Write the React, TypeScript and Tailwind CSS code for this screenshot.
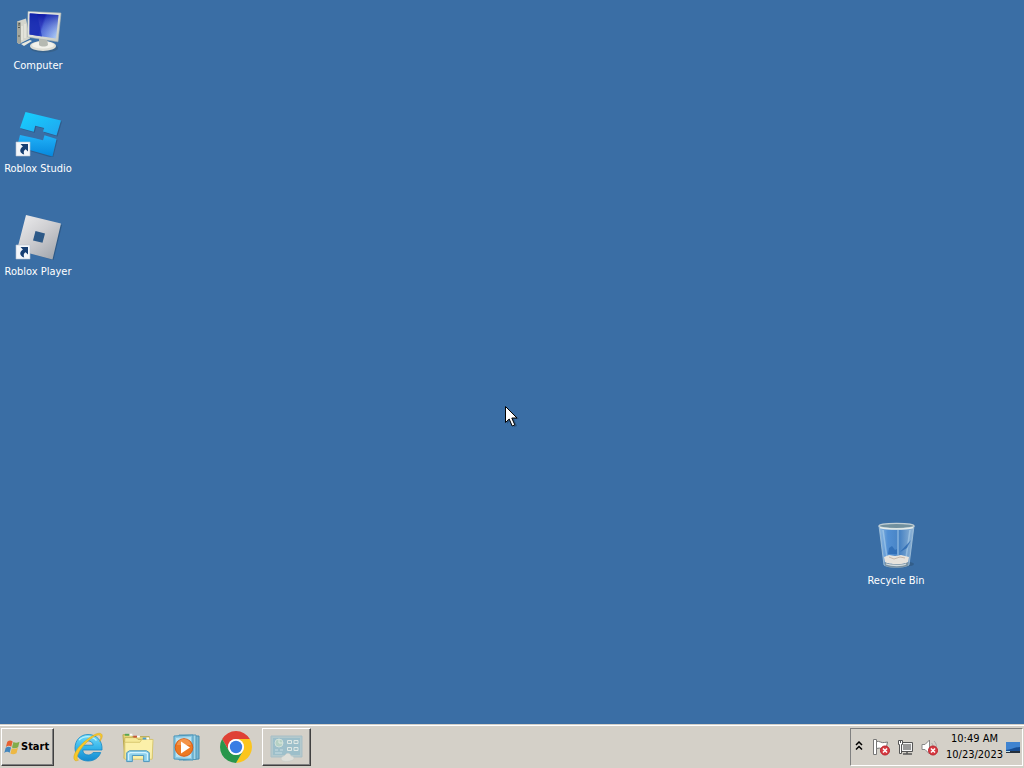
import type { ReactNode } from "react";

function ShortcutArrow() {
  return (
    <g>
      <path d="M2 33h14v14H2z" fill="#f4f7fb" stroke="#b9c4d0" strokeWidth=".6" />
      <path d="M6.500 35h7.500v7.500l-2.400-2.300c-1.800 1.100-2.300 2.500-1.400 5.300-4.600-1.300-5.400-5.100-1.300-8z" fill="#173f73" />
    </g>
  );
}

function ComputerIcon() {
  return (
    <svg viewBox="-2 -2 48 48" className="size-12" aria-hidden="true">
      <defs>
        <linearGradient id="screen" x1="0" y1=".3" x2="1" y2=".6">
          <stop offset="0" stopColor="#1222a8" />
          <stop offset=".42" stopColor="#0a12b4" />
          <stop offset=".5" stopColor="#3d5bd8" />
          <stop offset="1" stopColor="#a5c4f2" />
        </linearGradient>
        <linearGradient id="screenFade" x1="0" y1="0" x2="0" y2="1">
          <stop offset="0" stopColor="#0712a0" stopOpacity=".75" />
          <stop offset="1" stopColor="#b4d0f8" stopOpacity=".15" />
        </linearGradient>
        <linearGradient id="bezel" x1="0" y1="0" x2="1" y2="1">
          <stop offset="0" stopColor="#f4f5ee" />
          <stop offset="1" stopColor="#c6cac2" />
        </linearGradient>
      </defs>
      <path d="M1 13.500 10 10.500l4 20-11 5.500-2-1.500z" fill="#d4d5cc" />
      <path d="M1 13.500 5 14.500v20.500l-2 1-2-1.500z" fill="#a3a69d" />
      <path d="M2 17h2M2 19.500h2M2 28h2" stroke="#555950" />
      <circle cx="3.200" cy="15.500" r=".8" fill="#4a514a" />
      <path d="M6 18v14M9 16v14" stroke="#f1f1e8" />
      <path d="m5 36 9-4 2 1-8 5z" fill="#e9e9df" />
      <ellipse cx="28" cy="40" rx="14" ry="4.500" fill="#365a7b" opacity=".6" />
      <ellipse cx="27" cy="38" rx="13" ry="5" fill="#deded5" />
      <ellipse cx="27" cy="37" rx="11" ry="3.600" fill="#f2f2eb" />
      <path d="M23 30h8l1 7c-2 2-7 2-9 0z" fill="#b6bab2" />
      <path d="M12 3.500 45 5l-3 28.800L11.500 29z" fill="url(#bezel)" stroke="#a7b1b2" strokeWidth=".6" />
      <path d="M13.700 5.500 42.500 7 40 30.500l-26.500-4z" fill="url(#screen)" />
      <path d="M13.700 5.500 42.500 7 40 30.500l-26.500-4z" fill="url(#screenFade)" />
      <path d="m14 5.500 7 .4 5 22.500-12.500-2z" fill="#142ab1" opacity=".65" />
    </svg>
  );
}

function StudioIcon() {
  return (
    <svg viewBox="0 0 48 48" className="size-12" aria-hidden="true">
      <defs>
        <linearGradient id="studioTop" x1="0" y1="0" x2="1" y2="1">
          <stop offset="0" stopColor="#16d2ff" />
          <stop offset="1" stopColor="#20a4ef" />
        </linearGradient>
        <linearGradient id="studioBase" x1="0" y1="0" x2="0" y2="1">
          <stop offset="0" stopColor="#20b2f8" />
          <stop offset="1" stopColor="#0788dd" />
        </linearGradient>
      </defs>
      <g fill="#234d76" opacity=".5" transform="translate(1 1)">
        <path d="m11.500 3 35.500 8.500-4.500 15-13.500-4 1.200-3.500-9-2.200-1.500 6L6 19z" />
        <path d="m6 26 14 3 9 2.300 1.500-5L42.500 30 38 48 3 37.500z" />
      </g>
      <path d="m11.500 3 35.500 8.500-4.500 15-13.500-4 1.200-3.500-9-2.200-1.500 6L6 19z" fill="url(#studioTop)" />
      <path d="m6 26 14 3 9 2.300 1.500-5L42.500 30 38.500 47.500 3 37.500z" fill="url(#studioBase)" />
      <ShortcutArrow />
    </svg>
  );
}

function PlayerIcon() {
  return (
    <svg viewBox="0 0 48 48" className="size-12" aria-hidden="true">
      <defs>
        <linearGradient id="player" x1="0" y1="0" x2=".8" y2="1">
          <stop offset="0" stopColor="#eeeeef" />
          <stop offset=".5" stopColor="#cfcfd2" />
          <stop offset="1" stopColor="#a3a7ae" />
        </linearGradient>
      </defs>
      <path d="m13 4 35 9-8.500 35L4 38z" fill="#23496f" opacity=".55" />
      <path fillRule="evenodd" d="m12 3 35 8.500-8.500 36L3 38zm9.500 16-2.500 9.500 9.500 2.300 2.500-9.300z" fill="url(#player)" />
      <ShortcutArrow />
    </svg>
  );
}

function RecycleBinIcon() {
  return (
    <svg viewBox="0 0 48 48" className="size-12" aria-hidden="true">
      <defs>
        <linearGradient id="glass" x1="0" x2="1">
          <stop offset="0" stopColor="#aed4f4" stopOpacity=".75" />
          <stop offset=".25" stopColor="#5798e0" stopOpacity=".8" />
          <stop offset=".6" stopColor="#4b88cb" stopOpacity=".8" />
          <stop offset="1" stopColor="#b6d3ea" stopOpacity=".7" />
        </linearGradient>
      </defs>
      <ellipse cx="28" cy="43" rx="14" ry="3" fill="#294d70" opacity=".5" />
      <path d="m7 5 5 39c4 3 20 3 25 0l5-39z" fill="url(#glass)" stroke="#a7c5dc" strokeWidth=".8" />
      <path d="m11 9 4 28M26 9v25M38 9l-4 28" stroke="#b8d8ef" strokeWidth="1.600" opacity=".5" />
      <path d="m16 33 1-6 3-2 3 4 2-1v5z" fill="#2463ae" opacity=".65" />
      <path d="m28 31 11-12-4 8z" fill="#2463ae" opacity=".75" />
      <path d="m12 36 5-2 6 1 6-1 8 2-1 5c-4 3-19 3-23 0z" fill="#e7e3dc" />
      <path d="m17 36 5 2 6-2 5 1" stroke="#c8b8a9" fill="none" />
      <path d="M12.500 41c5 3 19 3 24 0l-.5 3.500c-5 3-18 3-23 0z" fill="#7d929f" />
      <path d="M14 43c6 2 16 2 20 0" stroke="#d6dfe2" strokeWidth="1.300" fill="none" />
      <ellipse cx="24.500" cy="5" rx="17.500" ry="2.600" fill="#71909e" stroke="#c1ced3" strokeWidth="1.400" />
      <path d="M8 6.500c8 2 25 2 33 0" stroke="#e4ebe9" strokeWidth="1.500" fill="none" />
    </svg>
  );
}

function WindowsLogo() {
  return (
    <svg viewBox="0 0 17 17" className="size-4 shrink-0" aria-hidden="true">
      <path d="M3.500 3c2-1.800 3.800-1.900 5.700-.4L7.700 8.200c-1.900-1.300-3.700-1.200-5.700.3z" fill="#e66031" />
      <path d="M10 3.200c2 1.200 4 1 6.500-.2L15 8.700c-2.500 1.400-4.500 1.500-6.500.2z" fill="#82ac4a" />
      <path d="M1.800 9.300c2-1.400 3.800-1.500 5.700-.3L6 14.600C4 13.200 2.200 13.400.3 14.800z" fill="#4386bd" />
      <path d="M8.300 9.700c2 1.200 4 1.100 6.500-.3l-1.500 5.700c-2.500 1.300-4.500 1.400-6.500.2z" fill="#edb844" />
    </svg>
  );
}

function ExplorerBrowserIcon() {
  return (
    <svg viewBox="2 0 32 32" className="size-8" aria-hidden="true">
      <defs>
        <linearGradient id="ieBlue" x1="0" y1="0" x2="0" y2="1">
          <stop offset="0" stopColor="#77dcf8" />
          <stop offset=".5" stopColor="#35b5ea" />
          <stop offset="1" stopColor="#1689ce" />
        </linearGradient>
      </defs>
      <path fillRule="evenodd" d="M17 3.500C9.500 3.500 4 9.300 4 17s5.500 13 13 13c6 0 10.700-3 12.700-8.500h-7.600c-1 1.700-2.700 2.500-4.800 2.500-3.200 0-5.300-1.700-5.600-5H31C31.700 9.800 25.700 3.500 17 3.500m-5.200 10.700c.6-2.800 2.400-4.300 5.300-4.300 2.700 0 4.700 1.500 5.100 4.300z" fill="url(#ieBlue)" stroke="#1788c5" strokeWidth=".8" />
      <path d="M8 9c4.500-4.300 12.500-4.800 17.500.5" stroke="#b8f1fb" strokeWidth="1.300" fill="none" />
      <path d="M4 29.500c-4-4 3-14 10.500-19.800C21.300 4.200 28 .5 30.500 3c1.700 1.700.3 4.800-1.700 7.600 1.100-3.200 1.400-5.500 0-6.300-2.300-1.400-7.800 2.100-12.700 6.700C9 17.500 3.500 27.500 7.500 29c-1.200.8-2.400 1-3.500.5" fill="#f7c928" stroke="#d8a51b" strokeWidth=".5" />
    </svg>
  );
}

function FoldersIcon() {
  return (
    <svg viewBox="0 1 34 34" className="h-8 w-[34px]" aria-hidden="true">
      <path d="M1 5h8l2 2h18v22H3z" fill="#e8d676" stroke="#b9a64b" />
      <path d="M3 8h12l2 2h15v20H2z" fill="#f5e998" stroke="#c6b35b" />
      <path d="M3 13h16l2-3h12l-1 21H3z" fill="#fbf0a9" stroke="#d5c56d" />
      <path d="M3 5h5" stroke="#55a653" strokeWidth="2" />
      <path d="M12 7h4" stroke="#c65838" strokeWidth="2" />
      <path d="M22 9h4" stroke="#4a9ed1" strokeWidth="2" />
      <path d="M8 5h3M16 7h3M26 9h3" stroke="#fff" strokeWidth="2" />
      <path d="M5 33.500V24l3-2h18l3 2v9.500h-6V27H11v6.500z" fill="#8ed1ec" stroke="#4692bd" />
      <path d="M7 32v-7l2-1h16l2 1v7" stroke="#d4f4ff" strokeWidth="1.200" fill="none" />
    </svg>
  );
}

function MediaIcon() {
  return (
    <svg viewBox="0 -1 32 32" className="size-8" aria-hidden="true">
      <path d="M12 4h16v23l-16 1z" fill="#75b6d3" stroke="#4b8dad" />
      <path d="M8 3h17v24.500L8 28z" fill="#a6d7e8" stroke="#5297b8" />
      <path d="m3 4 19-1v25L3 27z" fill="#8bc9e4" stroke="#4d97ba" />
      <path d="m5 6 15-1v21L5 25z" fill="#b9e2ef" />
      <circle cx="13" cy="15.500" r="8.800" fill="#ed7922" stroke="#d85b17" />
      <path d="M6 13c1-8 13-8 14 0" fill="#f6a05a" opacity=".7" />
      <path d="m10 9.500 9 6-9 6z" fill="#fff" />
    </svg>
  );
}

function ChromeIcon() {
  return (
    <svg viewBox="0 0 32 32" className="size-8" aria-hidden="true">
      <path d="M2.150 8A16 16 0 0 1 29.850 8H16a8 8 0 0 0-6.930 12z" fill="#df4135" />
      <path d="M29.850 8A16 16 0 0 1 16 32l6.930-12A8 8 0 0 0 16 8z" fill="#fbc51d" />
      <path d="M16 32A16 16 0 0 1 2.150 8l6.920 12a8 8 0 0 0 13.860 0z" fill="#28964b" />
      <circle cx="16" cy="16" r="8" fill="#fff" />
      <circle cx="16" cy="16" r="6.200" fill="#397de4" />
    </svg>
  );
}

function ControlPanelIcon() {
  return (
    <svg viewBox="1 0 36 32" className="h-8 w-9" aria-hidden="true">
      <path d="M3 5h31v21H3z" fill="#b3c9cd" stroke="#a9bfc6" />
      <path d="M5 7h27v17H5z" fill="#9dbfca" />
      <circle cx="11" cy="12" r="4" fill="#b5d1c4" stroke="#d0e0da" />
      <path d="M11 8v4h4" stroke="#dde8df" fill="none" />
      <path d="M7 19h3m2 0h3M7 22h7" stroke="#b3ced6" strokeWidth="2" />
      <path d="M19.500 9.500h4v3h-4zM26 9.500h4v3h-4zM19.500 16.500h4v3h-4zM26 16.500h4v3h-4z" fill="#a5c2c9" stroke="#dfe8e5" />
      <path d="M13 28c0-3 3-2 5-5 2-2 5 0 5 2 3 0 4 3 2 4-4 2-12 2-12-1" fill="#dfdfd9" stroke="#c0c9c6" strokeWidth=".5" />
    </svg>
  );
}

function ErrorBadge() {
  return (
    <g>
      <circle cx="12" cy="11.500" r="4.500" fill="#d83b43" stroke="#b9232c" />
      <path d="m10 9.500 4 4m0-4-4 4" stroke="#fff" strokeWidth="1.500" />
    </g>
  );
}

function FlagIcon() {
  return (
    <svg viewBox="0 0 17 17" className="size-[17px]" fill="none" aria-hidden="true">
      <path d="M.5.500h3v15h-3z" fill="#fff" stroke="#777" />
      <path d="M3.500 2.500c3-1 5 2 8 1l3-.500-1.500 7c-4 1-5-2-9.500-.5z" fill="#fff" stroke="#777" />
      <ErrorBadge />
    </svg>
  );
}

function NetworkIcon() {
  return (
    <svg viewBox="0 0 17 17" className="size-[17px]" fill="none" aria-hidden="true">
      <path d="M4.500 3.500h11v9h-11z" fill="#f5f5f5" stroke="#555" />
      <path d="M6 5h8v6H6z" fill="#999" />
      <path d="M10 13v2M6 15h9" stroke="#555" strokeWidth="1.500" />
      <path d="M1.500 1.500h4v4h-1v9h-2v-9h-1z" fill="#fff" stroke="#555" />
      <path d="M3.500 1v3" stroke="#555" />
    </svg>
  );
}

function VolumeIcon() {
  return (
    <svg viewBox="0 0 17 17" className="size-[17px]" fill="none" aria-hidden="true">
      <path d="M1 5.500h3L8.500 1v14L4 10.500H1z" fill="#fff" stroke="#888" />
      <path d="M10.500 4c1 1 1.500 2 1.500 4M13 2c2 2 2.500 4 2.500 6" stroke="#aaa" />
      <ErrorBadge />
    </svg>
  );
}

function ShowDesktopIcon() {
  return (
    <svg viewBox="0 0 16 16" className="size-4 shrink-0" aria-hidden="true">
      <path d="M1 3h14v11H1z" fill="#174d93" />
      <path d="M1 3h14v5C9 8 6 11 1 11z" fill="#3f83d0" />
      <path d="M1 12h14v2H1z" fill="#242f3c" />
      <path d="M1 12.500h4" stroke="#b9ddec" />
    </svg>
  );
}

function DesktopItem({ label, children }: { label: string; children: ReactNode }) {
  return (
    <button type="button" className="flex w-[76px] flex-col items-center gap-1 text-[11px] leading-4 text-white">
      {children}
      <span className="whitespace-nowrap">{label}</span>
    </button>
  );
}

function QuickLaunch({ label, children }: { label: string; children: ReactNode }) {
  return (
    <button type="button" aria-label={label} className="flex h-full w-[49px] items-center justify-center">
      {children}
    </button>
  );
}

const raised =
  "border border-t-white border-l-white border-r-[#404040] border-b-[#404040] shadow-[inset_-1px_-1px_0_#808080]";

export default function App() {
  return (
    <div className="flex min-h-screen flex-col bg-[#3a6ea5] font-['DejaVu_Sans_Condensed','DejaVu_Sans',sans-serif]">
      <main className="relative flex-1">
        <div className="flex flex-col items-start gap-[35px] pt-1.5">
          <DesktopItem label="Computer"><ComputerIcon /></DesktopItem>
          <DesktopItem label="Roblox Studio"><StudioIcon /></DesktopItem>
          <DesktopItem label="Roblox Player"><PlayerIcon /></DesktopItem>
        </div>
        <div className="absolute right-[90px] bottom-[135px]">
          <DesktopItem label="Recycle Bin"><RecycleBinIcon /></DesktopItem>
        </div>
        <svg viewBox="0 0 16 24" className="absolute top-[406px] left-[505px] h-6 w-4" aria-hidden="true">
          <path d="M2 2v16l4-4 3 7 3-1-3-7h5z" fill="#16304b" opacity=".4" />
          <path d="M.5.500v16l3.700-3.500 3 7 2.600-1.100-3-6.900H12z" fill="#fff" stroke="#000" />
        </svg>
      </main>

      <footer className="flex h-11 items-stretch border-t border-[#d4d0c8] bg-[#d4d0c8] text-black shadow-[inset_0_1px_0_#fff]">
        <div className="flex flex-1 items-stretch pt-[3px] pb-0.5 pl-px">
          <button type="button" className={`${raised} flex w-[53px] items-center gap-px pl-0.5 text-[11px] font-bold`}>
            <WindowsLogo />
            <span>Start</span>
          </button>
          <nav aria-label="Quick launch" className="ml-2.5 flex items-stretch">
            <QuickLaunch label="Internet Explorer"><ExplorerBrowserIcon /></QuickLaunch>
            <QuickLaunch label="Windows Explorer"><FoldersIcon /></QuickLaunch>
            <QuickLaunch label="Media Player"><MediaIcon /></QuickLaunch>
            <QuickLaunch label="Google Chrome"><ChromeIcon /></QuickLaunch>
          </nav>
          <button type="button" aria-label="Control Panel" className={`${raised} ml-0.5 flex w-[49px] items-center justify-center`}>
            <ControlPanelIcon />
          </button>
        </div>
        <section aria-label="Notification area" className="mt-[3px] mr-px mb-0.5 flex items-center border border-t-[#808080] border-l-[#808080] border-r-white border-b-white pr-px pl-1">
          <button type="button" aria-label="Show hidden icons" className="flex h-4 w-2 items-center justify-center">
            <svg viewBox="0 0 8 12" className="h-3 w-2" fill="none" stroke="#000" strokeWidth="1.500" aria-hidden="true">
              <path d="m1 4 3-3 3 3M1 8.500l3-3 3 3" />
            </svg>
          </button>
          <div className="ml-2.5 flex gap-[7px]">
            <button type="button" aria-label="Action Center"><FlagIcon /></button>
            <button type="button" aria-label="Network"><NetworkIcon /></button>
            <button type="button" aria-label="Volume"><VolumeIcon /></button>
          </div>
          <time dateTime="2023-10-23T10:49" className="ml-2 flex flex-col items-center text-[11px] leading-4">
            <span>10:49 AM</span>
            <span>10/23/2023</span>
          </time>
          <button type="button" aria-label="Show desktop" className="ml-0.5"><ShowDesktopIcon /></button>
        </section>
      </footer>
    </div>
  );
}
